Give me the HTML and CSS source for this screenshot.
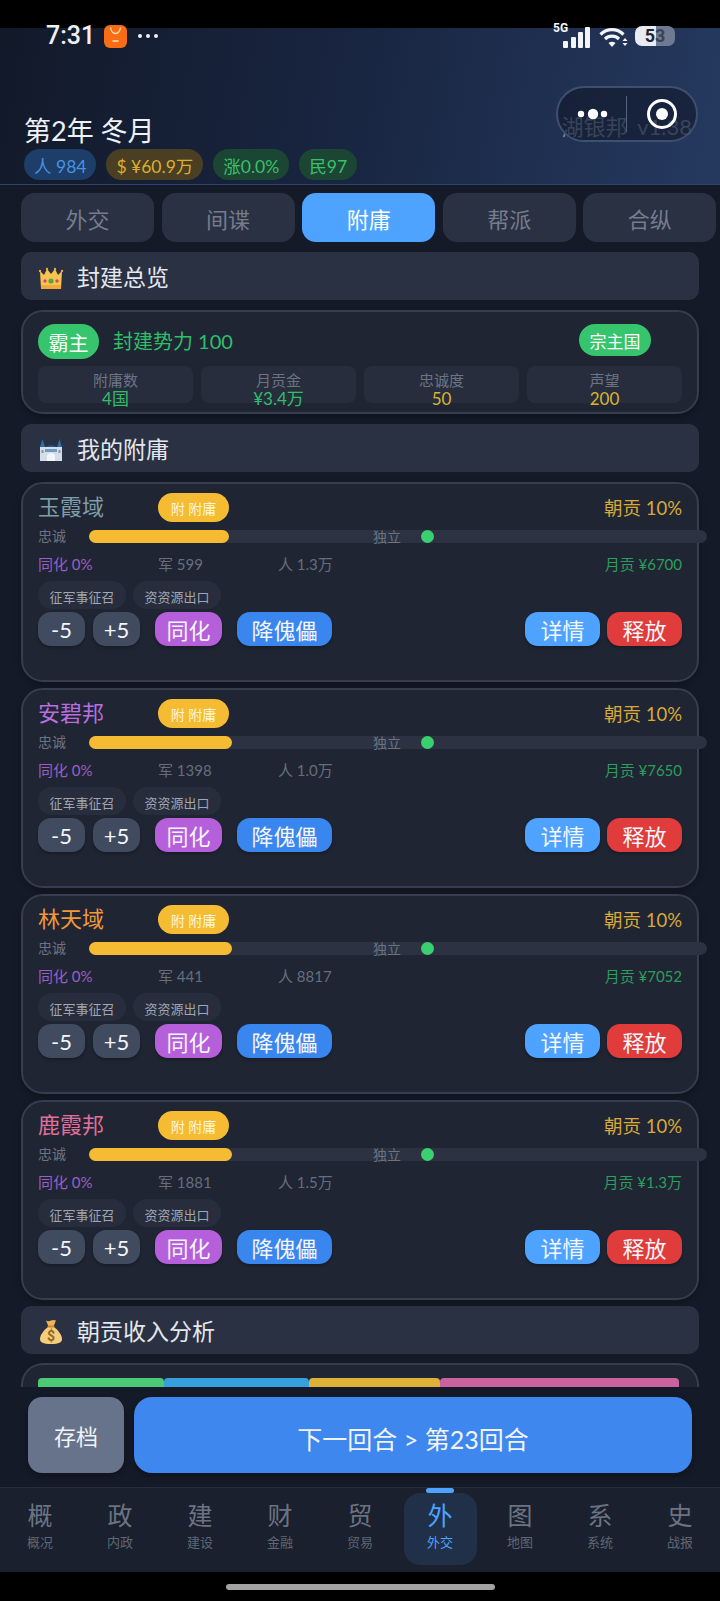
FILE: index.html
```html
<!DOCTYPE html>
<html lang="zh-CN">
<head>
  <meta charset="UTF-8">
  <meta name="viewport" content="width=device-width, initial-scale=1.0">
  <title>附庸</title>
  <link rel="stylesheet" href="styles.css">
</head>
<body>
  <div class="screen">
    <!-- Status bar -->
    <div class="status-bar">
      <span class="clock">7:31</span>
      <svg class="app-icon" width="23" height="23" viewBox="0 0 23 23">
        <rect width="23" height="23" rx="6" fill="#f96d14"/>
        <path d="M6.5 2.5c.6 4 2.4 6 5 6s4.400-2 5-6" fill="none" stroke="#ffe3c8" stroke-width="1.300"/>
        <rect x="8.500" y="15" width="6" height="2" fill="#ffc596"/>
      </svg>
      <span class="more-dots"><i></i><i></i><i></i></span>
      <span class="status-right">
        <span class="net-label">5G</span>
        <svg class="signal" width="28" height="22" viewBox="0 0 28 22">
          <rect x="0" y="14" width="5" height="7" rx="1" fill="#f2f4f8"/>
          <rect x="8" y="10" width="5" height="11" rx="1" fill="#f2f4f8"/>
          <rect x="15" y="5" width="5" height="16" rx="1" fill="#f2f4f8"/>
          <rect x="22" y="0" width="5" height="21" rx="1" fill="#f2f4f8"/>
        </svg>
        <svg class="wifi" width="30" height="22" viewBox="0 0 30 22">
          <path d="M1.500 8.500C8 2 18 2 24.500 8.500" fill="none" stroke="#f2f4f8" stroke-width="3.200"/>
          <path d="M6 13c4-3.800 10-3.800 14 0" fill="none" stroke="#f2f4f8" stroke-width="3.200"/>
          <path d="M9.500 17l3.500 4 3.500-4c-2-1.600-5-1.600-7 0z" fill="#f2f4f8"/>
          <path d="M26 12l2.500 3h-5zM26 20l2.500-3h-5z" fill="#f2f4f8"/>
        </svg>
        <span class="battery"><span class="battery-num">5<em>3</em></span></span>
      </span>
    </div>

    <!-- Header -->
    <header class="top-header">
      <div class="header-row">
        <h1 class="year-title">第2年 冬月</h1>
        <span class="version">湖银邦 v1.38</span>
      </div>
      <div class="pill-row">
        <span class="pill pill-blue">人 984</span>
        <span class="pill pill-gold">$ ¥60.9万</span>
        <span class="pill pill-green">涨0.0%</span>
        <span class="pill pill-green">民97</span>
      </div>
      <div class="capsule">
        <svg width="50" height="14" viewBox="0 0 50 14">
          <circle cx="11" cy="7" r="3.200" fill="#fff"/>
          <circle cx="23" cy="7" r="5.200" fill="#fff"/>
          <circle cx="34" cy="7" r="3.200" fill="#fff"/>
        </svg>
        <span class="capsule-line"></span>
        <svg width="32" height="32" viewBox="0 0 32 32">
          <circle cx="16" cy="16" r="13.500" fill="none" stroke="#fff" stroke-width="3"/>
          <circle cx="16" cy="16" r="6" fill="#fff"/>
        </svg>
      </div>
    </header>

    <main class="content">
      <div class="tabs">
        <div class="tab">外交</div>
        <div class="tab">间谍</div>
        <div class="tab active">附庸</div>
        <div class="tab">帮派</div>
        <div class="tab">合纵</div>
      </div>

      <div class="section-title first">
        <svg width="26" height="24" viewBox="0 0 26 24">
          <path d="M2 5l4 4 3-6 4 5 4-5 3 6 4-4-1 18H3z" fill="#f7c452"/>
          <path d="M3 19h20v4H3z" fill="#f2a93b"/>
          <circle cx="13" cy="15" r="2.600" fill="#55a83a"/>
          <circle cx="7" cy="15" r="1.700" fill="#d9456f"/>
          <circle cx="19" cy="15" r="1.700" fill="#d9456f"/>
          <circle cx="2" cy="5" r="1.200" fill="#f2a93b"/>
          <circle cx="9" cy="3" r="1.200" fill="#f2a93b"/>
          <circle cx="17" cy="3" r="1.200" fill="#f2a93b"/>
          <circle cx="24" cy="5" r="1.200" fill="#f2a93b"/>
        </svg>
        <span>封建总览</span>
      </div>

      <section class="overview-card">
        <div class="overview-top">
          <span class="rank-badge">霸主</span>
          <span class="power">封建势力 100</span>
          <span class="realm-badge">宗主国</span>
        </div>
        <div class="stats">
          <div class="stat"><div class="stat-label">附庸数</div><div class="stat-value green">4国</div></div>
          <div class="stat"><div class="stat-label">月贡金</div><div class="stat-value green">¥3.4万</div></div>
          <div class="stat"><div class="stat-label">忠诚度</div><div class="stat-value yellow">50</div></div>
          <div class="stat"><div class="stat-label">声望</div><div class="stat-value yellow">200</div></div>
        </div>
      </section>

      <div class="section-title">
        <svg width="26" height="24" viewBox="0 0 26 24">
          <path d="M2 9l2.500-8L7 9zM19 9l2.500-8L24 9z" fill="#2f6ea6"/>
          <path d="M6 11c2-5 12-5 14 0z" fill="#24598c"/>
          <rect x="2" y="9" width="22" height="14" fill="#d5dde8"/>
          <rect x="7" y="11" width="12" height="3" fill="#6f9cc6"/>
          <path d="M9 23v-5c0-4 8-4 8 0v5z" fill="#f2f5f9"/>
          <rect x="3.500" y="12" width="2" height="3" fill="#8296ab"/>
          <rect x="20.500" y="12" width="2" height="3" fill="#8296ab"/>
        </svg>
        <span>我的附庸</span>
      </div>

      <section class="vassal-card">
        <div class="vassal-head">
          <span class="vassal-name teal">玉霞域</span>
          <span class="vassal-badge">附 附庸</span>
          <span class="tribute">朝贡 10%</span>
        </div>
        <div class="loyalty">
          <span class="loyalty-label">忠诚</span>
          <div class="bar">
            <div class="bar-fill" style="width: 140px"></div>
            <span class="bar-text">独立</span>
            <span class="bar-dot"></span>
          </div>
        </div>
        <div class="facts">
          <span class="fact-assim">同化 0%</span>
          <span class="fact">军 599</span>
          <span class="fact">人 1.3万</span>
          <span class="fact-money">月贡 ¥6700</span>
        </div>
        <div class="tags">
          <span class="tag">征军事征召</span>
          <span class="tag">资资源出口</span>
        </div>
        <div class="actions">
          <button class="btn btn-step">-5</button>
          <button class="btn btn-step">+5</button>
          <button class="btn btn-purple">同化</button>
          <button class="btn btn-blue">降傀儡</button>
          <button class="btn btn-sky push-right">详情</button>
          <button class="btn btn-red">释放</button>
        </div>
      </section>

      <section class="vassal-card">
        <div class="vassal-head">
          <span class="vassal-name purple">安碧邦</span>
          <span class="vassal-badge">附 附庸</span>
          <span class="tribute">朝贡 10%</span>
        </div>
        <div class="loyalty">
          <span class="loyalty-label">忠诚</span>
          <div class="bar">
            <div class="bar-fill" style="width: 143px"></div>
            <span class="bar-text">独立</span>
            <span class="bar-dot"></span>
          </div>
        </div>
        <div class="facts">
          <span class="fact-assim">同化 0%</span>
          <span class="fact">军 1398</span>
          <span class="fact">人 1.0万</span>
          <span class="fact-money">月贡 ¥7650</span>
        </div>
        <div class="tags">
          <span class="tag">征军事征召</span>
          <span class="tag">资资源出口</span>
        </div>
        <div class="actions">
          <button class="btn btn-step">-5</button>
          <button class="btn btn-step">+5</button>
          <button class="btn btn-purple">同化</button>
          <button class="btn btn-blue">降傀儡</button>
          <button class="btn btn-sky push-right">详情</button>
          <button class="btn btn-red">释放</button>
        </div>
      </section>

      <section class="vassal-card">
        <div class="vassal-head">
          <span class="vassal-name orange">林天域</span>
          <span class="vassal-badge">附 附庸</span>
          <span class="tribute">朝贡 10%</span>
        </div>
        <div class="loyalty">
          <span class="loyalty-label">忠诚</span>
          <div class="bar">
            <div class="bar-fill" style="width: 143px"></div>
            <span class="bar-text">独立</span>
            <span class="bar-dot"></span>
          </div>
        </div>
        <div class="facts">
          <span class="fact-assim">同化 0%</span>
          <span class="fact">军 441</span>
          <span class="fact">人 8817</span>
          <span class="fact-money">月贡 ¥7052</span>
        </div>
        <div class="tags">
          <span class="tag">征军事征召</span>
          <span class="tag">资资源出口</span>
        </div>
        <div class="actions">
          <button class="btn btn-step">-5</button>
          <button class="btn btn-step">+5</button>
          <button class="btn btn-purple">同化</button>
          <button class="btn btn-blue">降傀儡</button>
          <button class="btn btn-sky push-right">详情</button>
          <button class="btn btn-red">释放</button>
        </div>
      </section>

      <section class="vassal-card">
        <div class="vassal-head">
          <span class="vassal-name pink">鹿霞邦</span>
          <span class="vassal-badge">附 附庸</span>
          <span class="tribute">朝贡 10%</span>
        </div>
        <div class="loyalty">
          <span class="loyalty-label">忠诚</span>
          <div class="bar">
            <div class="bar-fill" style="width: 143px"></div>
            <span class="bar-text">独立</span>
            <span class="bar-dot"></span>
          </div>
        </div>
        <div class="facts">
          <span class="fact-assim">同化 0%</span>
          <span class="fact">军 1881</span>
          <span class="fact">人 1.5万</span>
          <span class="fact-money">月贡 ¥1.3万</span>
        </div>
        <div class="tags">
          <span class="tag">征军事征召</span>
          <span class="tag">资资源出口</span>
        </div>
        <div class="actions">
          <button class="btn btn-step">-5</button>
          <button class="btn btn-step">+5</button>
          <button class="btn btn-purple">同化</button>
          <button class="btn btn-blue">降傀儡</button>
          <button class="btn btn-sky push-right">详情</button>
          <button class="btn btn-red">释放</button>
        </div>
      </section>

      <div class="section-title income-title">
        <svg width="26" height="26" viewBox="0 0 26 26">
          <path d="M8 1.500c2 1 3 1 5 0s3-.6 5 0l-2.500 6h-5z" fill="#f0b356"/>
          <path d="M10 8h6c4 3 8 8 8 12 0 3.500-3 5-11 5S2 23.500 2 20c0-4 4-9 8-12z" fill="#f7cd7c"/>
          <rect x="9.500" y="6.500" width="7" height="2" rx="1" fill="#c98a2e"/>
          <text x="13" y="21.500" text-anchor="middle" class="bag-sign">$</text>
        </svg>
        <span>朝贡收入分析</span>
      </div>

      <section class="income-card">
        <div class="income-bar">
          <span class="seg seg-green"></span>
          <span class="seg seg-blue"></span>
          <span class="seg seg-yellow"></span>
          <span class="seg seg-pink"></span>
        </div>
      </section>
    </main>

    <!-- Bottom actions -->
    <div class="action-bar">
      <button class="save-btn">存档</button>
      <button class="next-btn">下一回合 &gt; 第23回合</button>
    </div>

    <nav class="bottom-nav">
      <div class="nav-item"><span class="nav-char">概</span><span class="nav-label">概况</span></div>
      <div class="nav-item"><span class="nav-char">政</span><span class="nav-label">内政</span></div>
      <div class="nav-item"><span class="nav-char">建</span><span class="nav-label">建设</span></div>
      <div class="nav-item"><span class="nav-char">财</span><span class="nav-label">金融</span></div>
      <div class="nav-item"><span class="nav-char">贸</span><span class="nav-label">贸易</span></div>
      <div class="nav-item active"><span class="nav-char">外</span><span class="nav-label">外交</span></div>
      <div class="nav-item"><span class="nav-char">图</span><span class="nav-label">地图</span></div>
      <div class="nav-item"><span class="nav-char">系</span><span class="nav-label">系统</span></div>
      <div class="nav-item"><span class="nav-char">史</span><span class="nav-label">战报</span></div>
    </nav>

    <div class="home-area"><span class="home-bar"></span></div>
  </div>
</body>
</html>
```

FILE: styles.css
```css
* {
  box-sizing: border-box;
}

body {
  margin: 0;
  background: #000;
  font-family: Lato, "Noto Sans CJK SC", sans-serif;
  line-height: 1.2;
}

.screen {
  position: relative;
  width: 720px;
  height: 1601px;
  display: flex;
  flex-direction: column;
  overflow: hidden;
  padding-top: 28px;
  background: #000;
}

/* Status bar */
.status-bar {
  position: absolute;
  top: 20px;
  left: 46px;
  right: 45px;
  height: 32px;
  display: flex;
  align-items: center;
  z-index: 2;
}

.clock {
  font-family: Roboto, sans-serif;
  font-size: 25px;
  font-weight: 500;
  color: #eef0f4;
  width: 58px;
}

.more-dots {
  display: flex;
  gap: 4px;
  margin-left: 11px;
}

.more-dots i {
  width: 4px;
  height: 4px;
  border-radius: 50%;
  background: #eef0f4;
}

.status-right {
  position: relative;
  margin-left: auto;
  display: flex;
  align-items: center;
}

.net-label {
  position: absolute;
  left: -10px;
  top: -2px;
  font-family: Roboto, sans-serif;
  font-size: 12px;
  font-weight: 700;
  color: #f2f4f8;
}

.signal {
  margin-top: 4px;
}

.wifi {
  margin-left: 8px;
  margin-top: 2px;
}

.battery {
  width: 40px;
  height: 20px;
  margin-left: 6px;
  border-radius: 7px;
  background: linear-gradient(90deg, #e8ebf1 0, #e8ebf1 52%, #6f7a90 52%, #6f7a90 100%);
  display: flex;
  align-items: center;
  justify-content: center;
}

.battery-num {
  font-family: Roboto, sans-serif;
  font-size: 18px;
  font-weight: 700;
  color: #1d2433;
}

.battery-num em {
  font-style: normal;
  color: #3a4356;
}

/* Header */
.top-header {
  position: relative;
  height: 157px;
  flex-shrink: 0;
  padding: 83px 25px 0 24px;
  background: linear-gradient(100deg, #121929 0%, #192642 50%, #25395f 100%);
  border-bottom: 1px solid #2e4468;
}

.header-row {
  display: flex;
  justify-content: space-between;
  align-items: center;
  height: 36px;
}

.year-title {
  margin: 4px 0 0;
  font-size: 27px;
  font-weight: 400;
  color: #eef1f6;
}

.version {
  margin-right: 3px;
  margin-bottom: 3px;
  font-size: 22px;
  word-spacing: 4px;
  color: #7685a1;
}

.pill-row {
  display: flex;
  gap: 10px;
  margin-top: 2px;
}

.pill {
  height: 31px;
  padding: 3px 10px 0;
  border-radius: 16px;
  font-size: 17.5px;
  display: flex;
  align-items: center;
}

.pill-blue {
  background: #1c3e68;
  color: #4a92e4;
}

.pill-gold {
  background: #4a3f22;
  color: #dcae30;
}

.pill-green {
  background: #1c4634;
  color: #3cbf6b;
}

.capsule {
  position: absolute;
  top: 58px;
  left: 556px;
  width: 142px;
  height: 56px;
  border: 2px solid #3f4f6e;
  border-radius: 28px;
  background: rgba(16, 24, 41, 0.6);
  display: flex;
  align-items: center;
  padding-left: 12px;
}

.capsule-line {
  width: 1px;
  height: 36px;
  margin-left: 6px;
  background: #56627a;
}

.capsule svg:last-child {
  margin-left: 19px;
}

/* Scrolling area */
.content {
  flex: 1;
  min-height: 0;
  overflow: hidden;
  padding: 8px 21px 0;
  background: #141a27;
}

.tabs {
  display: flex;
  gap: 7.6px;
  width: 700px;
}

.tab {
  width: 133px;
  height: 49px;
  flex-shrink: 0;
  padding-top: 6px;
  border-radius: 14px;
  background: #2a3142;
  color: #747d8e;
  font-size: 22px;
  display: flex;
  align-items: center;
  justify-content: center;
}

.tab.active {
  background: #4da3ff;
  color: #fff;
}

.section-title {
  height: 48px;
  margin-top: 10px;
  padding: 4px 17px 0;
  border-radius: 10px;
  background: #2a3142;
  color: #e4e7ee;
  font-size: 23px;
  display: flex;
  align-items: center;
  gap: 13px;
}

.income-title {
  margin-top: 6px;
}

.bag-sign {
  font-family: Roboto, sans-serif;
  font-size: 14px;
  font-weight: 700;
  fill: #8a6a2a;
}

/* Overview */
.overview-card {
  height: 104px;
  margin-top: 10px;
  padding: 12px 15px 9px;
  border: 2px solid #363d4e;
  border-radius: 22px;
  background: #1f2533;
  box-shadow: 0 3px 6px rgba(0, 0, 0, 0.25);
}

.overview-top {
  display: flex;
  align-items: flex-start;
  height: 35px;
}

.rank-badge {
  width: 61px;
  height: 35px;
  padding-top: 3px;
  border-radius: 18px;
  background: #36c46c;
  color: #fff;
  font-size: 20px;
  display: flex;
  align-items: center;
  justify-content: center;
}

.power {
  margin-left: 14px;
  margin-top: 5px;
  font-size: 20px;
  color: #2fbf6a;
}

.realm-badge {
  width: 72px;
  height: 32px;
  margin-left: auto;
  margin-right: 31px;
  padding-top: 4px;
  border-radius: 16px;
  background: #36c46c;
  color: #fff;
  font-size: 17px;
  display: flex;
  align-items: center;
  justify-content: center;
}

.stats {
  display: flex;
  gap: 8px;
  margin-top: 7px;
}

.stat {
  flex: 1;
  height: 37px;
  padding-top: 5px;
  border-radius: 8px;
  background: #272d3c;
  text-align: center;
}

.stat-label {
  height: 18px;
  font-size: 15px;
  line-height: 18px;
  color: #6c7484;
}

.stat-value {
  height: 20px;
  font-size: 17px;
  line-height: 20px;
}

.green {
  color: #2fbf6a;
}

.yellow {
  color: #d9b52f;
}

/* Vassal cards */
.vassal-card {
  height: 200px;
  margin-top: 6px;
  padding: 9px 15px 33px;
  border: 2px solid #363d4e;
  border-radius: 22px;
  background: #1f2533;
  box-shadow: 0 3px 6px rgba(0, 0, 0, 0.25);
}

.section-title + .vassal-card {
  margin-top: 10px;
}

.vassal-head {
  display: flex;
  align-items: center;
  height: 29px;
}

.vassal-name {
  width: 120px;
  font-size: 22px;
}

.teal {
  color: #7f9ea8;
}

.purple {
  color: #b76fe0;
}

.orange {
  color: #f0993a;
}

.pink {
  color: #e0709a;
}

.vassal-badge {
  width: 71px;
  height: 29px;
  padding-top: 3px;
  border-radius: 15px;
  background: #f5bb33;
  color: #fff5dc;
  font-size: 14px;
  display: flex;
  align-items: center;
  justify-content: center;
}

.tribute {
  margin-left: auto;
  margin-top: 2px;
  font-size: 18.5px;
  color: #d9a93a;
}

.loyalty {
  display: flex;
  align-items: center;
  height: 13px;
  margin-top: 8px;
}

.loyalty-label {
  width: 51px;
  flex-shrink: 0;
  font-size: 14px;
  color: #6b7383;
}

.bar {
  position: relative;
  width: 618px;
  height: 13px;
  flex-shrink: 0;
  border-radius: 7px;
  background: #2c3242;
}

.bar-fill {
  height: 13px;
  border-radius: 7px;
  background: #f5bb33;
}

.bar-text {
  position: absolute;
  top: -2px;
  left: 284px;
  font-size: 14px;
  line-height: 17px;
  color: #6b7383;
}

.bar-dot {
  position: absolute;
  top: 0;
  left: 332px;
  width: 13px;
  height: 13px;
  border-radius: 50%;
  background: #3bd06f;
}

.facts {
  display: flex;
  align-items: center;
  height: 20px;
  margin-top: 11px;
  margin-bottom: 1px;
  font-size: 15px;
}

.fact-assim {
  width: 120px;
  color: #9a5fc4;
}

.fact {
  width: 120px;
  color: #666e7e;
}

.fact-money {
  margin-left: auto;
  color: #2c9e5c;
}

.tags {
  display: flex;
  gap: 7px;
  margin-top: 7px;
}

.tag {
  width: 88px;
  height: 28px;
  padding-top: 5px;
  border-radius: 14px;
  background: #272d3c;
  color: #a0a6b2;
  font-size: 13px;
  display: flex;
  align-items: center;
  justify-content: center;
}

.actions {
  display: flex;
  gap: 8px;
  margin-top: 3px;
}

.btn {
  height: 34px;
  padding: 0;
  border: none;
  border-radius: 13px;
  color: #f4f6fa;
  font-family: inherit;
  font-size: 22px;
  box-shadow: 0 2px 3px rgba(0, 0, 0, 0.25);
}

.btn-step {
  width: 47px;
  background: #414b5f;
}

.btn-purple {
  width: 67px;
  margin-left: 7px;
  background: #b65fdb;
}

.btn-blue {
  width: 95px;
  margin-left: 7px;
  background: #3a86ef;
}

.btn-sky {
  width: 75px;
  background: #4da3ff;
}

.btn-red {
  width: 75px;
  margin-left: -1px;
  background: #e03c3c;
}

.push-right {
  margin-left: auto;
}

/* Income */
.income-card {
  height: 60px;
  margin-top: 9px;
  padding: 13px 15px 0;
  border: 2px solid #363d4e;
  border-bottom: none;
  border-radius: 22px 22px 0 0;
  background: #1f2533;
}

.income-bar {
  display: flex;
  width: 641px;
  height: 20px;
}

.seg {
  border-radius: 4px 4px 0 0;
}

.seg-green {
  width: 126px;
  background: #4cc974;
}

.seg-blue {
  width: 145px;
  background: #36a0dc;
}

.seg-yellow {
  width: 131px;
  background: #deb136;
}

.seg-pink {
  width: 239px;
  background: #c9629f;
}

/* Bottom actions */
.action-bar {
  height: 100px;
  flex-shrink: 0;
  padding: 10px 28px 0 28px;
  background: #141a27;
  display: flex;
  gap: 10px;
}

.save-btn,
.next-btn {
  height: 76px;
  padding: 0;
  border: none;
  color: #f1f3f7;
  font-family: inherit;
  box-shadow: 0 3px 6px rgba(0, 0, 0, 0.3);
}

.save-btn {
  width: 96px;
  border-radius: 14px;
  background: #66738a;
  font-size: 22px;
}

.next-btn {
  flex: 1;
  border-radius: 18px;
  background: #3d87ee;
  font-size: 25px;
  padding-top: 6px;
}

/* Bottom nav */
.bottom-nav {
  height: 85px;
  flex-shrink: 0;
  display: flex;
  background: #1a202d;
  border-top: 1px solid #262d3b;
}

.nav-item {
  position: relative;
  width: 80px;
  height: 84px;
  padding-top: 10px;
  display: flex;
  flex-direction: column;
  align-items: center;
  color: #6b7383;
}

.nav-char {
  height: 34px;
  font-size: 25px;
  line-height: 34px;
}

.nav-label {
  height: 18px;
  margin-top: 1px;
  font-size: 13px;
  line-height: 18px;
  color: #5f6776;
}

.nav-item.active {
  color: #4da3ff;
}

.nav-item.active .nav-label {
  color: #4da3ff;
}

.nav-item.active::before {
  content: "";
  position: absolute;
  top: 5px;
  left: 4px;
  width: 73px;
  height: 72px;
  border-radius: 16px;
  background: #1f3048;
}

.nav-item.active::after {
  content: "";
  position: absolute;
  top: 0;
  left: 26px;
  width: 28px;
  height: 5px;
  border-radius: 3px;
  background: #4da3ff;
}

.nav-item.active span {
  position: relative;
}

/* Home indicator */
.home-area {
  height: 29px;
  flex-shrink: 0;
  background: #000;
  padding-top: 12px;
  display: flex;
  justify-content: center;
}

.home-bar {
  width: 269px;
  height: 6px;
  border-radius: 3px;
  background: #a3a3a3;
}
```
